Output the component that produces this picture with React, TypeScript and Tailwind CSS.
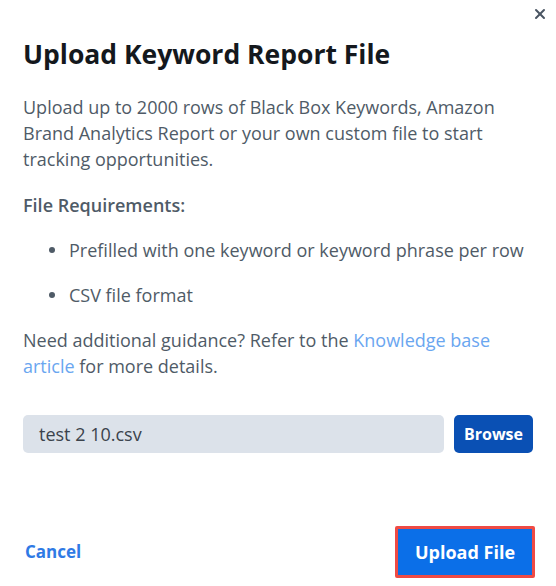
import { X } from "lucide-react";

export default function App() {
  return (
    <div
      className="relative w-[556px] h-[586px] bg-white text-[#4f5b67]"
      style={{ fontFamily: '"Open Sans", "Noto Sans", sans-serif' }}
    >
      <button className="absolute right-[8px] top-[6px] text-[#4a5563]">
        <X size={16} strokeWidth={3} />
      </button>

      <div className="flex flex-col px-[23px] pt-[38px]">
        <h1 className="text-[26.5px] font-bold text-[#14181d] leading-[32px]">
          Upload Keyword Report File
        </h1>

        <p className="mt-[24px] text-[18px] leading-[26px]">
          Upload up to 2000 rows of Black Box Keywords, Amazon Brand Analytics
          Report or your own custom file to start tracking opportunities.
        </p>

        <p className="mt-[20px] text-[18px] leading-[26px] font-semibold">
          File Requirements:
        </p>

        <ul className="mt-[19px] flex flex-col gap-[19px] text-[18px] leading-[26px]">
          <li className="flex items-center">
            <span className="ml-[26px] mr-[14px] h-[6px] w-[6px] rounded-full bg-[#4f5b67]" />
            Prefilled with one keyword or keyword phrase per row
          </li>
          <li className="flex items-center">
            <span className="ml-[26px] mr-[14px] h-[6px] w-[6px] rounded-full bg-[#4f5b67]" />
            CSV file format
          </li>
        </ul>

        <p className="mt-[19px] text-[18px] leading-[26px]">
          Need additional guidance? Refer to the{" "}
          <a className="text-[#6aa6f0]">Knowledge base article</a> for more
          details.
        </p>

        <div className="mt-[36px] flex items-center gap-[10px]">
          <div className="flex h-[38px] flex-1 items-center rounded-[5px] bg-[#dce2ea] px-[16px] text-[18px] text-[#3b434c]">
            test 2 10.csv
          </div>
          <button className="h-[38px] rounded-[5px] bg-[#0a50b4] px-[10px] text-[16px] font-bold text-white">
            Browse
          </button>
        </div>

        <div className="mt-[73px] flex items-center justify-between">
          <button className="ml-[2px] text-[17px] font-bold text-[#2f7ae5]">Cancel</button>
          <div className="-mr-[2px] rounded-[2px] bg-[#ef4b45] p-[3px]">
            <button className="h-[46px] w-[134px] bg-[#0b6fe8] text-[18px] font-bold text-white">
              Upload File
            </button>
          </div>
        </div>
      </div>
    </div>
  );
}
